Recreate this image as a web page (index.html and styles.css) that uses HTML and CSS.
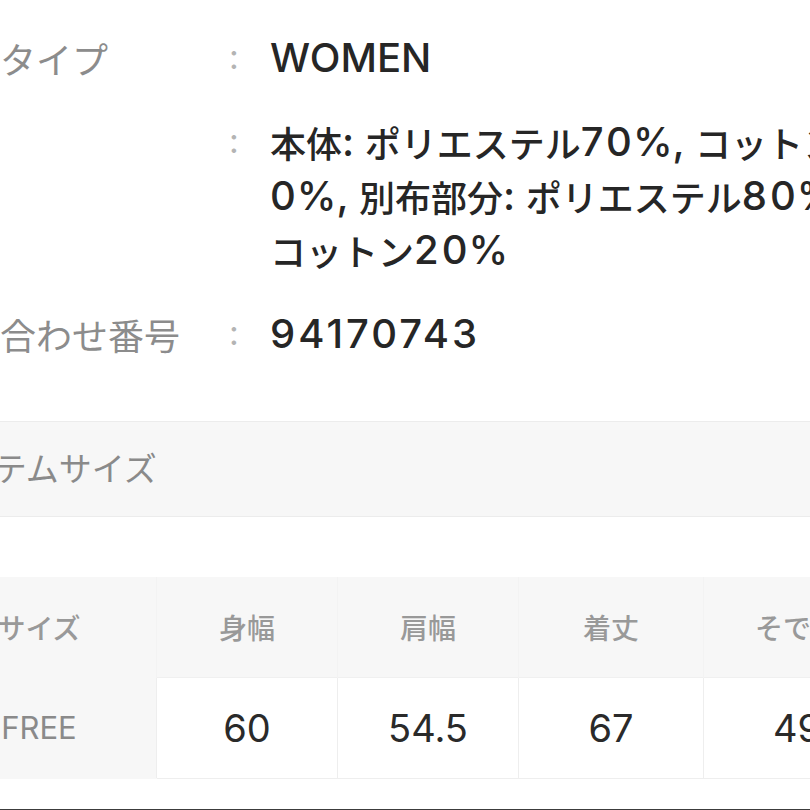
FILE: index.html
```html
<!DOCTYPE html>
<html lang="ja">
<head>
<meta charset="utf-8">
<title>商品情報</title>
<link rel="stylesheet" href="styles.css">
</head>
<body>
<div class="page">
  <dl class="spec">
    <div class="spec-row">
      <dt class="spec-label">性別タイプ</dt>
      <dd class="spec-colon">:</dd>
      <dd class="spec-value"><span class="line"><span class="lat">WOMEN</span></span></dd>
    </div>
    <div class="spec-row">
      <dt class="spec-label">素材</dt>
      <dd class="spec-colon">:</dd>
      <dd class="spec-value">
        <span class="line"><span class="ja">本体</span><span class="lat">: </span><span class="ja">ポリエステル</span><span class="lat num">70</span><span class="lat">%, </span><span class="ja">コットン</span><span class="lat num">3</span></span>
        <span class="line"><span class="lat num">0</span><span class="lat">%, </span><span class="ja">別布部分</span><span class="lat">: </span><span class="ja">ポリエステル</span><span class="lat num">80</span><span class="lat">%,</span></span>
        <span class="line"><span class="ja">コットン</span><span class="lat num">20</span><span class="lat">%</span></span>
      </dd>
    </div>
    <div class="spec-row">
      <dt class="spec-label">問い合わせ番号</dt>
      <dd class="spec-colon">:</dd>
      <dd class="spec-value"><span class="line"><span class="lat num">94170743</span></span></dd>
    </div>
  </dl>

  <div class="band">
    <h2 class="band-title">アイテムサイズ</h2>
  </div>

  <table class="size-table">
    <thead>
      <tr>
        <th class="col-size">サイズ</th>
        <th class="col-w1">身幅</th>
        <th class="col-w2">肩幅</th>
        <th class="col-w3">着丈</th>
        <th class="col-w4">そで丈</th>
        <th class="col-w5">裾幅</th>
      </tr>
    </thead>
    <tbody>
      <tr>
        <th class="row-head">FREE</th>
        <td>60</td>
        <td>54.5</td>
        <td>67</td>
        <td>49</td>
        <td>52</td>
      </tr>
    </tbody>
  </table>

  <div class="divider"></div>
</div>
</body>
</html>
```

FILE: styles.css
```css
html, body {
  margin: 0;
  padding: 0;
  background: #ffffff;
  overflow: hidden;
}

body {
  width: 810px;
  height: 810px;
  font-family: "Inter", "Noto Sans CJK JP", sans-serif;
  color: #2a2a2a;
}

.page {
  margin-left: -78px;
  width: 1200px;
}

/* ---------- spec list ---------- */
.spec {
  margin: 0;
  padding: 31px 0 0 6px;
  display: flex;
  flex-direction: column;
  gap: 30px;
}

.spec-row {
  display: grid;
  grid-template-columns: 301px 41px auto;
  align-items: start;
}

.spec-label {
  height: 54px;
  line-height: 54px;
  font-family: "Noto Sans CJK JP", sans-serif;
  font-size: 36px;
  color: #8c8c8c;
  white-space: nowrap;
  margin: 0;
}

.spec-colon {
  height: 54px;
  line-height: 52px;
  margin: 0;
  font-family: "Inter", sans-serif;
  font-size: 34px;
  color: #b4b4b4;
}

.spec-value {
  margin: 0;
  font-weight: 500;
  color: #262626;
  white-space: nowrap;
}

.spec-value .line {
  display: flex;
  align-items: center;
  height: 54px;
}

.lat {
  font-family: "Inter", sans-serif;
  font-size: 40px;
  line-height: 54px;
  white-space: pre;
}

.num {
  letter-spacing: 3px;
  margin-right: -2px;
}

.ja {
  font-family: "Noto Sans CJK JP", sans-serif;
  font-size: 36px;
  line-height: 54px;
}

/* ---------- band ---------- */
.band {
  margin-top: 60px;
  height: 94px;
  background: #f7f7f7;
  border-top: 1px solid #ececec;
  border-bottom: 1px solid #ececec;
  padding-left: 8px;
  display: flex;
  align-items: center;
}

.band-title {
  margin: -4px 0 0 0;
  font-family: "Noto Sans CJK JP", sans-serif;
  font-weight: 400;
  font-size: 33px;
  color: #8a8a8a;
  white-space: nowrap;
}

/* ---------- size table ---------- */
.size-table {
  margin-top: 60px;
  border-collapse: collapse;
  table-layout: fixed;
}

.size-table th,
.size-table td {
  height: 100px;
  padding: 0;
  text-align: center;
  vertical-align: middle;
  white-space: nowrap;
}

.size-table thead th {
  background: #f7f7f7;
  font-family: "Noto Sans CJK JP", sans-serif;
  font-weight: 500;
  font-size: 28px;
  color: #999999;
  border-right: 1px solid #f3f3f3;
}

.col-size { width: 234px; }
.col-w1 { width: 180px; }
.col-w2 { width: 180px; }
.col-w3 { width: 184px; }
.col-w4 { width: 186px; }
.col-w5 { width: 186px; }

.size-table tbody th.row-head {
  background: #f7f7f7;
  font-family: "Inter", sans-serif;
  font-weight: 400;
  font-size: 31px;
  color: #8a8a8a;
  border-bottom: 1px solid #f7f7f7;
}

.size-table tbody td {
  background: #ffffff;
  font-family: "Inter", sans-serif;
  font-size: 38px;
  color: #2a2a2a;
  border: 1px solid #eeeeee;
  border-top-color: #f0f0f0;
}

.divider {
  margin-top: 30px;
  height: 2px;
  background: #3c3c3c;
}
```
